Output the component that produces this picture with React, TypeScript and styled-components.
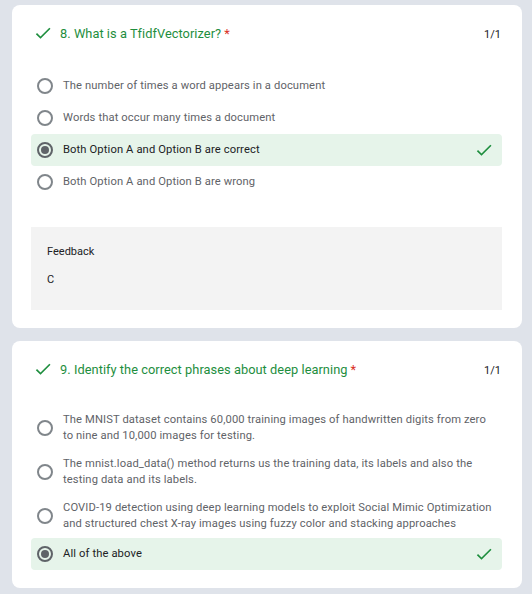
import React from "react";
import styled, { createGlobalStyle } from "styled-components";

const Global = createGlobalStyle`
  html, body { margin: 0; padding: 0; background: #dfe3ea; }
  body { font-family: Roboto, "Liberation Sans", Arial, sans-serif; }
`;

const Page = styled.div`
  display: flex;
  flex-direction: column;
  gap: 13px;
  padding: 5px 10px 0 12px;
  height: 594px;
  overflow: hidden;
  box-sizing: border-box;
`;

const Card = styled.section`
  background: #fff;
  border-radius: 8px;
  padding: 18px 20px 18px 19px;
  display: flex;
  flex-direction: column;
  flex-shrink: 0;
`;

const TitleRow = styled.div`
  display: flex;
  align-items: center;
  height: 20px;
  padding: 0 1px 0 2px;
  margin-bottom: 27px;
`;

const TitleIcon = styled.span`
  width: 20px;
  height: 20px;
  display: flex;
  align-items: center;
  justify-content: center;
  margin-right: 7px;
`;

const Title = styled.div`
  flex: 1;
  font-size: 12.8px;
  color: #1e8e3e;
  letter-spacing: 0.05px;
`;

const Star = styled.span`
  color: #d93025;
  margin-left: 3px;
`;

const Score = styled.div`
  font-size: 11px;
  color: #202124;
  padding-top: 2px;
`;

const Options = styled.div`
  display: flex;
  flex-direction: column;
`;

const Row = styled.div<{ $selected?: boolean }>`
  display: flex;
  align-items: center;
  min-height: 32px;
  box-sizing: border-box;
  padding: 6px 6px 6px 6px;
  border-radius: 4px;
  background: ${(p) => (p.$selected ? "#e6f4ea" : "transparent")};
`;

const Radio = styled.span<{ $checked?: boolean }>`
  width: 16px;
  height: 16px;
  box-sizing: border-box;
  border-radius: 50%;
  border: 2px solid ${(p) => (p.$checked ? "#5f6368" : "#80868b")};
  flex-shrink: 0;
  display: flex;
  align-items: center;
  justify-content: center;
  margin-right: 10px;
  &::after {
    content: "";
    display: ${(p) => (p.$checked ? "block" : "none")};
    width: 8px;
    height: 8px;
    border-radius: 50%;
    background: #5f6368;
  }
`;

const OptionText = styled.div<{ $selected?: boolean }>`
  flex: 1;
  font-size: 11.2px;
  line-height: 16px;
  color: ${(p) => (p.$selected ? "#202124" : "#5f6368")};
  letter-spacing: 0.12px;
`;

const CheckSlot = styled.span`
  display: flex;
  margin-right: 2px;
`;

const Feedback = styled.div`
  margin-top: 29px;
  background: #f3f3f3;
  padding: 17px 16px 22px;
  display: flex;
  flex-direction: column;
  gap: 12px;
  font-size: 11px;
  line-height: 16px;
  color: #202124;
`;

const Check = ({ size = 20 }: { size?: number }) => (
  <svg width={size} height={size} viewBox="0 0 24 24" fill="#1e8e3e">
    <path d="M9 16.17L4.83 12l-1.42 1.41L9 19 21 7l-1.41-1.41z" />
  </svg>
);

type Q = {
  title: string;
  options: string[];
  correct: number;
  feedback?: string;
};

const questions: Q[] = [
  {
    title: "8. What is a TfidfVectorizer?",
    options: [
      "The number of times a word appears in a document",
      "Words that occur many times a document",
      "Both Option A and Option B are correct",
      "Both Option A and Option B are wrong",
    ],
    correct: 2,
    feedback: "C",
  },
  {
    title: "9. Identify the correct phrases about deep learning",
    options: [
      "The MNIST dataset contains 60,000 training images of handwritten digits from zero to nine and 10,000 images for testing.",
      "The mnist.load_data() method returns us the training data, its labels and also the testing data and its labels.",
      "COVID-19 detection using deep learning models to exploit Social Mimic Optimization and structured chest X-ray images using fuzzy color and stacking approaches",
      "All of the above",
    ],
    correct: 3,
  },
];

export default function App() {
  return (
    <>
      <Global />
      <Page>
        {questions.map((q) => (
          <Card key={q.title}>
            <TitleRow>
              <TitleIcon>
                <Check size={20} />
              </TitleIcon>
              <Title>
                {q.title}
                <Star>*</Star>
              </Title>
              <Score>1/1</Score>
            </TitleRow>
            <Options>
              {q.options.map((o, i) => (
                <Row key={o} $selected={i === q.correct}>
                  <Radio $checked={i === q.correct} />
                  <OptionText $selected={i === q.correct}>{o}</OptionText>
                  {i === q.correct && (
                    <CheckSlot>
                      <Check size={20} />
                    </CheckSlot>
                  )}
                </Row>
              ))}
            </Options>
            {q.feedback && (
              <Feedback>
                <div>Feedback</div>
                <div>{q.feedback}</div>
              </Feedback>
            )}
          </Card>
        ))}
      </Page>
    </>
  );
}
